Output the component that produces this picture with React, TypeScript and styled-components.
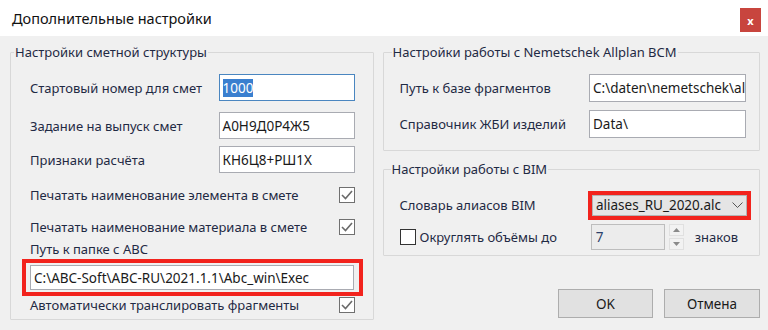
import React from 'react';
import styled, { createGlobalStyle } from 'styled-components';

const GlobalStyle = createGlobalStyle`
  html, body {
    margin: 0;
    padding: 0;
    background: #f0f0f0;
  }
  body {
    font-family: "Noto Sans", "Liberation Sans", sans-serif;
    font-size: 13px;
    color: #1f2a44;
  }
`;

const Dialog = styled.div`
  width: 768px;
  height: 330px;
  background: #f0f0f0;
  display: flex;
  flex-direction: column;
  overflow: hidden;
`;

const TitleBar = styled.div`
  height: 36px;
  background: #ffffff;
  display: flex;
  align-items: center;
  justify-content: space-between;
  padding: 0 7px 0 12px;
  flex-shrink: 0;
`;

const Title = styled.div`
  font-size: 14.5px;
  color: #111;
`;

const CloseButton = styled.div`
  width: 21px;
  height: 24px;
  background: #c8453e;
  color: #fff;
  font-size: 11px;
  font-weight: bold;
  display: flex;
  align-items: center;
  justify-content: center;
  margin-top: 4px;
`;

const Body = styled.div`
  flex: 1;
  display: flex;
  gap: 9px;
  padding: 8px 8px 0 10px;
`;

const Column = styled.div<{ $width: number }>`
  width: ${p => p.$width}px;
  display: flex;
  flex-direction: column;
`;

const Group = styled.fieldset<{ $height: number; $padLeft: number; $padRight: number }>`
  margin: 0;
  height: ${p => p.$height}px;
  box-sizing: border-box;
  border: 1px solid #d8d8d8;
  border-radius: 1px;
  padding: 0 ${p => p.$padRight}px 0 ${p => p.$padLeft}px;
  display: flex;
  flex-direction: column;
`;

const Legend = styled.legend<{ $indent: number }>`
  font-size: 13px;
  line-height: 16px;
  padding: 0 1px;
  margin-left: ${p => p.$indent}px;
  color: #1f2a44;
`;

const Row = styled.div<{ $top: number; $height?: number }>`
  display: flex;
  align-items: center;
  justify-content: space-between;
  margin-top: ${p => p.$top}px;
  height: ${p => p.$height ?? 27}px;
`;

const Label = styled.span`
  white-space: nowrap;
`;

const TextField = styled.div<{ $width: number; $height?: number; $focused?: boolean }>`
  width: ${p => p.$width}px;
  height: ${p => p.$height ?? 27}px;
  box-sizing: border-box;
  background: #fff;
  border: 1px solid ${p => (p.$focused ? '#4a86c0' : '#a9abb2')};
  display: flex;
  align-items: center;
  padding: 0 3px;
  overflow: hidden;
  white-space: nowrap;
  color: #1a1a1a;
  font-size: 13.5px;
`;

const Selected = styled.span`
  background: #3a7fcf;
  color: #fff;
`;

const Highlight = styled.div`
  border: 4px solid #f2231d;
  padding: 2px 4px;
  margin: 0 -8px;
`;

const Check = styled.svg`
  flex-shrink: 0;
`;

const CheckBox: React.FC<{ checked?: boolean }> = ({ checked }) => (
  <Check width="16" height="16" viewBox="0 0 16 16">
    <rect x="0.5" y="0.5" width="15" height="15" fill="#fff" stroke={checked ? '#707070' : '#333'} />
    {checked && <path d="M3 8 L6.5 11.5 L13 4" fill="none" stroke="#6a6a6a" strokeWidth="1.6" />}
  </Check>
);

const Combo = styled.div`
  width: 155px;
  height: 21px;
  box-sizing: border-box;
  background: #e5e5e5;
  border: 1px solid #b4b4b4;
  display: flex;
  align-items: center;
  padding-left: 3px;
  overflow: hidden;
  white-space: nowrap;
  font-size: 13.5px;
  color: #1a1a1a;
`;

const ComboText = styled.span`
  flex: 1;
  overflow: hidden;
`;

const ComboArrow = styled.div`
  width: 18px;
  display: flex;
  justify-content: center;
  flex-shrink: 0;
`;

const RedFrame = styled.div`
  border: 4px solid #f2231d;
  margin-right: -5px;
`;

const CheckLabel = styled.label`
  display: flex;
  align-items: center;
  gap: 4px;
  white-space: nowrap;
`;

const SpinGroup = styled.div`
  display: flex;
  align-items: center;
  gap: 4px;
  margin-right: 8px;
`;

const SpinField = styled.div`
  width: 74px;
  height: 26px;
  box-sizing: border-box;
  background: #ececec;
  border: 1px solid #bdbdbd;
  display: flex;
  align-items: center;
  padding-left: 4px;
  font-size: 13.5px;
  color: #2b3f6a;
`;

const Spinner = styled.div`
  display: flex;
  flex-direction: column;
  gap: 2px;
  margin-right: 7px;
`;

const SpinButton = styled.div`
  width: 15px;
  height: 12px;
  background: #f2f2f2;
  border: 1px solid #e0e0e0;
  box-sizing: border-box;
  display: flex;
  align-items: center;
  justify-content: center;
`;

const Buttons = styled.div`
  display: flex;
  justify-content: flex-end;
  gap: 11px;
  margin-top: 33px;
`;

const Button = styled.div<{ $width: number }>`
  width: ${p => p.$width}px;
  height: 29px;
  box-sizing: border-box;
  background: #e1e1e1;
  border: 1px solid #adadad;
  display: flex;
  align-items: center;
  justify-content: center;
  font-size: 13.5px;
  color: #1a1a1a;
`;

const Arrow: React.FC<{ up?: boolean }> = ({ up }) => (
  <svg width="7" height="4" viewBox="0 0 7 4">
    <path d={up ? 'M0 4 L3.5 0 L7 4 Z' : 'M0 0 L3.5 4 L7 0 Z'} fill="#8a8a8a" />
  </svg>
);

const App: React.FC = () => (
  <>
    <GlobalStyle />
    <Dialog>
      <TitleBar>
        <Title>Дополнительные настройки</Title>
        <CloseButton>x</CloseButton>
      </TitleBar>
      <Body>
        <Column $width={364}>
          <Group $height={276} $padLeft={19} $padRight={18}>
            <Legend $indent={-16}>Настройки сметной структуры</Legend>
            <Row $top={14}>
              <Label>Стартовый номер для смет</Label>
              <TextField $width={136} $focused>
                <Selected>1000</Selected>
              </TextField>
            </Row>
            <Row $top={11}>
              <Label>Задание на выпуск смет</Label>
              <TextField $width={136}>А0Н9Д0Р4Ж5</TextField>
            </Row>
            <Row $top={7}>
              <Label>Признаки расчёта</Label>
              <TextField $width={136}>КН6Ц8+РШ1Х</TextField>
            </Row>
            <Row $top={7} $height={30}>
              <Label>Печатать наименование элемента в смете</Label>
              <CheckBox checked />
            </Row>
            <Row $top={2} $height={30}>
              <Label>Печатать наименование материала в смете</Label>
              <CheckBox checked />
            </Row>
            <Row $top={-3} $height={20}>
              <Label>Путь к папке с ABC</Label>
            </Row>
            <Highlight>
              <TextField $width={324} $height={25}>C:\ABC-Soft\ABC-RU\2021.1.1\Abc_win\Exec</TextField>
            </Highlight>
            <Row $top={-2} $height={22}>
              <Label>Автоматически транслировать фрагменты</Label>
              <CheckBox checked />
            </Row>
          </Group>
        </Column>
        <Column $width={378}>
          <Group $height={107} $padLeft={16} $padRight={13}>
            <Legend $indent={-8}>Настройки работы с Nemetschek Allplan BCM</Legend>
            <Row $top={14} $height={28}>
              <Label>Путь к базе фрагментов</Label>
              <TextField $width={157} $height={28}>C:\daten\nemetschek\allplan</TextField>
            </Row>
            <Row $top={8} $height={28}>
              <Label>Справочник ЖБИ изделий</Label>
              <TextField $width={157} $height={28}>Data\</TextField>
            </Row>
          </Group>
          <Group $height={95} $padLeft={16} $padRight={13} style={{ marginTop: 10 }}>
            <Legend $indent={-9}>Настройки работы с BIM</Legend>
            <Row $top={14} $height={28}>
              <Label>Словарь алиасов BIM</Label>
              <RedFrame>
                <Combo>
                  <ComboText>aliases_RU_2020.alc</ComboText>
                  <ComboArrow>
                    <svg width="11" height="6" viewBox="0 0 11 6">
                      <path d="M0.5 0.5 L5.5 5.5 L10.5 0.5" fill="none" stroke="#555" strokeWidth="1" />
                    </svg>
                  </ComboArrow>
                </Combo>
              </RedFrame>
            </Row>
            <Row $top={4} $height={27}>
              <CheckLabel>
                <CheckBox />
                Округлять объёмы до
              </CheckLabel>
              <SpinGroup>
                <SpinField>7</SpinField>
                <Spinner>
                  <SpinButton><Arrow up /></SpinButton>
                  <SpinButton><Arrow /></SpinButton>
                </Spinner>
                <Label>знаков</Label>
              </SpinGroup>
            </Row>
          </Group>
          <Buttons>
            <Button $width={95}>OK</Button>
            <Button $width={96}>Отмена</Button>
          </Buttons>
        </Column>
      </Body>
    </Dialog>
  </>
);

export default App;
